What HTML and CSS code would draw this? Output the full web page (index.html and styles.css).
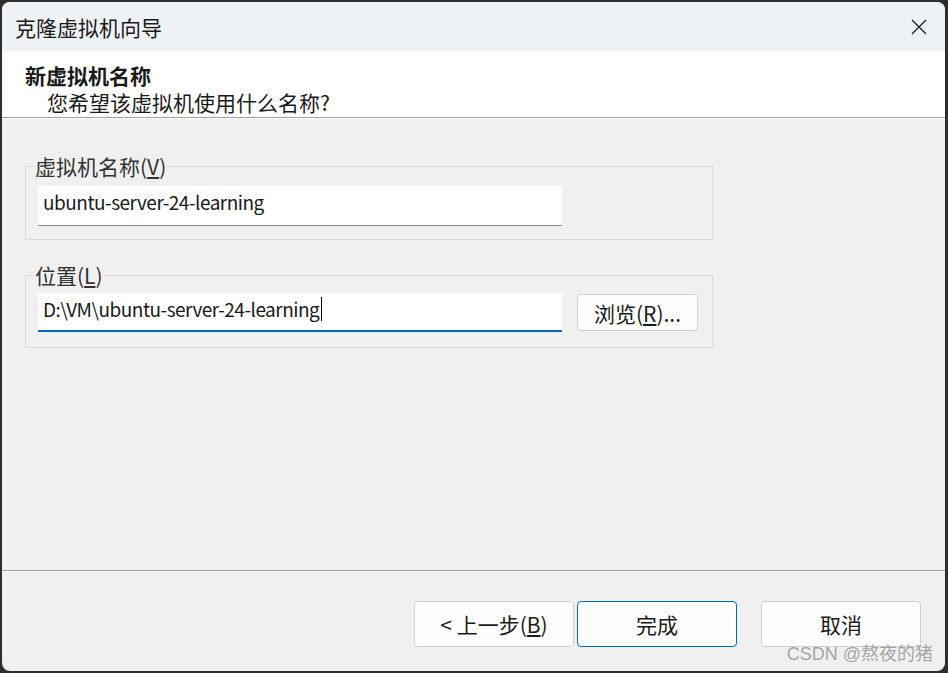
FILE: index.html
```html
<!DOCTYPE html>
<html lang="zh-CN">
<head>
    <meta charset="UTF-8">
    <title>克隆虚拟机向导</title>
    <link rel="stylesheet" href="styles.css">
</head>
<body>
    <div class="window">
        <div class="titlebar">
            <span class="title">克隆虚拟机向导</span>
            <button class="close" aria-label="关闭">
                <svg width="16" height="16" viewBox="0 0 16 16">
                    <path d="M1 1 L15 15 M15 1 L1 15" stroke="#1b1b1b" stroke-width="1.3" fill="none"/>
                </svg>
            </button>
        </div>

        <div class="header">
            <div class="header-title">新虚拟机名称</div>
            <div class="header-sub">您希望该虚拟机使用什么名称?</div>
        </div>

        <div class="content">
            <fieldset class="group">
                <legend>虚拟机名称(<u>V</u>)</legend>
                <div class="row">
                    <div class="field">ubuntu-server-24-learning</div>
                </div>
            </fieldset>

            <fieldset class="group location">
                <legend>位置(<u>L</u>)</legend>
                <div class="row">
                    <div class="field focused">D:\VM\ubuntu-server-24-learning<span class="caret"></span></div>
                    <button class="btn browse">浏览(<u>R</u>)...</button>
                </div>
            </fieldset>
        </div>

        <div class="footer">
            <button class="btn wide">&lt; 上一步(<u>B</u>)</button>
            <button class="btn wide default">完成</button>
            <button class="btn wide cancel">取消</button>
        </div>

        <div class="watermark">CSDN @熬夜的猪</div>
    </div>
</body>
</html>
```

FILE: styles.css
```css
* {
    margin: 0;
    padding: 0;
    box-sizing: border-box;
}

body {
    width: 948px;
    height: 673px;
    padding: 2px 3px 2px 2px;
    background: #2e2e2e;
    font-family: "Noto Sans CJK SC", "Noto Sans", sans-serif;
    font-size: 21px;
    color: #1a1a1a;
    overflow: hidden;
}

.window {
    position: relative;
    display: flex;
    flex-direction: column;
    width: 943px;
    height: 669px;
    border-radius: 8px;
    overflow: hidden;
    background: #f0f0f0;
}

.titlebar {
    display: flex;
    align-items: center;
    justify-content: space-between;
    height: 49px;
    padding: 0 18px 0 13px;
    background: #eef2f7;
}

.title {
    line-height: 28px;
    padding-top: 1px;
}

.close {
    display: flex;
    border: none;
    background: none;
}

.header {
    height: 67px;
    padding: 10px 0 0 23px;
    background: #fff;
    border-bottom: 1px solid #a0a0a0;
    box-shadow: 0 1px 0 #fff;
}

.header-title {
    font-weight: bold;
    line-height: 28px;
}

.header-sub {
    line-height: 27px;
    padding-left: 22px;
}

.content {
    flex: 1;
    padding: 37px 0 0 23px;
}

.group {
    width: 688px;
    border: 1px solid #dadada;
    padding: 9px 12px 13px 12px;
    margin-bottom: 24px;
}

.group legend {
    margin-left: -4px;
    padding: 0 1px;
    line-height: 22px;
    color: #333;
}

.location {
    padding-top: 7px;
    padding-bottom: 15px;
}

.row {
    display: flex;
    align-items: flex-start;
    gap: 15px;
}

.field {
    width: 524px;
    height: 40px;
    padding: 0 0 8px 5px;
    display: flex;
    align-items: center;
    background: #fff;
    border-bottom: 1px solid #8a8a8a;
    border-radius: 3px 3px 0 0;
    font-size: 19px;
    letter-spacing: -0.5px;
    white-space: nowrap;
}

.field.focused {
    height: 39px;
    padding-bottom: 6px;
    border-bottom: 2px solid #0067c0;
}

.caret {
    display: inline-block;
    width: 1px;
    height: 24px;
    margin-left: 2px;
    background: #000;
}

.btn {
    font-family: inherit;
    font-size: 21px;
    color: #1a1a1a;
    background: #fdfdfd;
    border: 1px solid #d0d0d0;
    border-radius: 4px;
}

.browse {
    width: 121px;
    height: 37px;
    margin-top: 1px;
}

.footer {
    display: flex;
    height: 101px;
    padding: 30px 24px 0 0;
    justify-content: flex-end;
    border-top: 1px solid #a0a0a0;
    box-shadow: inset 0 1px 0 #fff;
}

.wide {
    width: 160px;
    height: 46px;
}

.default {
    margin-left: 3px;
    border-color: #0067c0;
}

.cancel {
    margin-left: 24px;
}

.watermark {
    position: absolute;
    right: 12px;
    bottom: 6px;
    font-family: "Liberation Sans", "Noto Sans CJK SC", sans-serif;
    font-size: 18px;
    color: rgba(150, 150, 150, 0.85);
}
```
